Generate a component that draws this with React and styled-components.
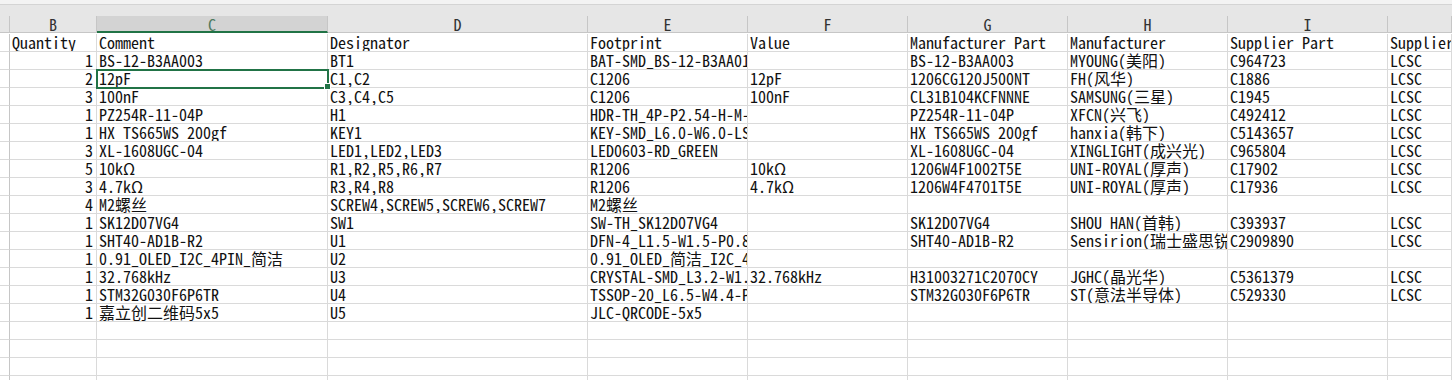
import React from "react";
import styled, { createGlobalStyle, css } from "styled-components";

const GlobalStyle = createGlobalStyle`
  html, body { margin: 0; padding: 0; background: #ffffff; }
  body { font-family: "Noto Sans Mono CJK SC", "Noto Sans CJK SC", "Liberation Mono", monospace; }
`;

const GRID = "#dadada";
const HEAD_LINE = "#c6c6c6";
const GREEN = "#217346";

const Page = styled.div`
  width: 1452px;
  height: 380px;
  overflow: hidden;
  background: #ffffff;
`;

const TopStrip = styled.div`
  height: 4px;
  background: #f3f3f3;
  border-bottom: 1px solid #d4d4d4;
`;

const HeaderBand = styled.div`
  height: 11px;
  background: #e6e6e6;
`;

const Sheet = styled.div`
  display: grid;
  grid-template-columns: 10px 87px 231px 260px 160px 160px 160px 160px 160px 1fr;
  grid-auto-rows: 18px;
  font-size: 16px;
  color: #111;
`;

const ColHead = styled.div`
  height: 17px;
  box-sizing: border-box;
  background: ${(p) => (p.$active ? "#d3d3d3" : "#e6e6e6")};
  border-right: 1px solid ${HEAD_LINE};
  border-bottom: ${(p) => (p.$active ? `2px solid ${GREEN}` : `1px solid ${HEAD_LINE}`)};
  color: ${(p) => (p.$active ? "#4f7a60" : "#333")};
  font-size: 16px;
  line-height: 16px;
  text-align: center;
  overflow: hidden;
  white-space: nowrap;
`;

const Cell = styled.div`
  box-sizing: border-box;
  height: 18px;
  border-right: 1px solid ${GRID};
  border-bottom: 1px solid ${GRID};
  padding: 0 2px;
  line-height: 16px;
  white-space: nowrap;
  overflow: hidden;
  text-align: ${(p) => (p.$num ? "right" : "left")};
  ${(p) => p.$num && css`padding-right: 3px;`}
  ${(p) =>
    p.$selected &&
    css`
      position: relative;
      z-index: 1;
      overflow: visible;
      outline: 2px solid ${GREEN};
      outline-offset: -1px;
      &::after {
        content: "";
        position: absolute;
        right: -4px;
        bottom: -3px;
        width: 5px;
        height: 5px;
        background: ${GREEN};
        border: 1px solid #ffffff;
      }
    `}
`;

const RowHead = styled.div`
  box-sizing: border-box;
  height: 18px;
  border-right: 1px solid ${HEAD_LINE};
  border-bottom: 1px solid ${GRID};
  background: #ffffff;
`;

const letters = ["B", "C", "D", "E", "F", "G", "H", "I", ""];

const rows = [
  ["Quantity", "Comment", "Designator", "Footprint", "Value", "Manufacturer Part", "Manufacturer", "Supplier Part", "Supplier"],
  ["1", "BS-12-B3AA003", "BT1", "BAT-SMD_BS-12-B3AA013", "", "BS-12-B3AA003", "MYOUNG(美阳)", "C964723", "LCSC"],
  ["2", "12pF", "C1,C2", "C1206", "12pF", "1206CG120J500NT", "FH(风华)", "C1886", "LCSC"],
  ["3", "100nF", "C3,C4,C5", "C1206", "100nF", "CL31B104KCFNNNE", "SAMSUNG(三星)", "C1945", "LCSC"],
  ["1", "PZ254R-11-04P", "H1", "HDR-TH_4P-P2.54-H-M-W8.5", "", "PZ254R-11-04P", "XFCN(兴飞)", "C492412", "LCSC"],
  ["1", "HX TS665WS 200gf", "KEY1", "KEY-SMD_L6.0-W6.0-LS8.0", "", "HX TS665WS 200gf", "hanxia(韩下)", "C5143657", "LCSC"],
  ["3", "XL-1608UGC-04", "LED1,LED2,LED3", "LED0603-RD_GREEN", "", "XL-1608UGC-04", "XINGLIGHT(成兴光)", "C965804", "LCSC"],
  ["5", "10kΩ", "R1,R2,R5,R6,R7", "R1206", "10kΩ", "1206W4F1002T5E", "UNI-ROYAL(厚声)", "C17902", "LCSC"],
  ["3", "4.7kΩ", "R3,R4,R8", "R1206", "4.7kΩ", "1206W4F4701T5E", "UNI-ROYAL(厚声)", "C17936", "LCSC"],
  ["4", "M2螺丝", "SCREW4,SCREW5,SCREW6,SCREW7", "M2螺丝", "", "", "", "", ""],
  ["1", "SK12D07VG4", "SW1", "SW-TH_SK12D07VG4", "", "SK12D07VG4", "SHOU HAN(首韩)", "C393937", "LCSC"],
  ["1", "SHT40-AD1B-R2", "U1", "DFN-4_L1.5-W1.5-P0.80-BL", "", "SHT40-AD1B-R2", "Sensirion(瑞士盛思锐)", "C2909890", "LCSC"],
  ["1", "0.91_OLED_I2C_4PIN_简洁", "U2", "0.91_OLED_简洁_I2C_4PIN", "", "", "", "", ""],
  ["1", "32.768kHz", "U3", "CRYSTAL-SMD_L3.2-W1.5-P2.20", "32.768kHz", "H31003271C2070CY", "JGHC(晶光华)", "C5361379", "LCSC"],
  ["1", "STM32G030F6P6TR", "U4", "TSSOP-20_L6.5-W4.4-P0.65", "", "STM32G030F6P6TR", "ST(意法半导体)", "C529330", "LCSC"],
  ["1", "嘉立创二维码5x5", "U5", "JLC-QRCODE-5x5", "", "", "", "", ""],
  ["", "", "", "", "", "", "", "", ""],
  ["", "", "", "", "", "", "", "", ""],
  ["", "", "", "", "", "", "", "", ""],
  ["", "", "", "", "", "", "", "", ""],
];

export default function App() {
  return (
    <>
      <GlobalStyle />
      <Page>
        <TopStrip />
        <HeaderBand />
        <Sheet>
          <ColHead />
          {letters.map((l, i) => (
            <ColHead key={i} $active={l === "C"}>
              {l}
            </ColHead>
          ))}
          {rows.map((r, ri) => (
            <React.Fragment key={ri}>
              <RowHead />
              {r.map((v, ci) => (
                <Cell
                  key={ci}
                  $num={ci === 0 && ri > 0}
                  $selected={ri === 2 && ci === 1}
                >
                  {v}
                </Cell>
              ))}
            </React.Fragment>
          ))}
        </Sheet>
      </Page>
    </>
  );
}
